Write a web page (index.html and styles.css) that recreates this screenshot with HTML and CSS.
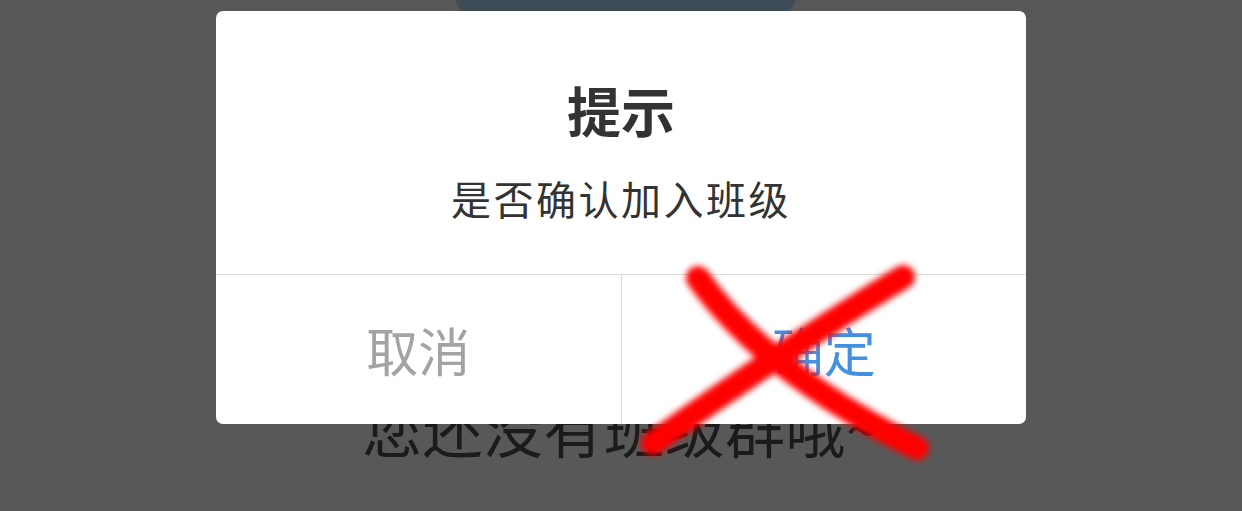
FILE: index.html
```html
<!DOCTYPE html>
<html lang="zh-CN">
<head>
<meta charset="utf-8">
<title>提示</title>
<link rel="stylesheet" href="styles.css">
</head>
<body>
<div class="page">
  <div class="banner"></div>
  <p class="empty">您还没有班级群哦~</p>
</div>

<div class="overlay">
  <div class="dialog">
    <div class="dialog-body">
      <h2 class="dialog-title">提示</h2>
      <p class="dialog-msg">是否确认加入班级</p>
    </div>
    <div class="dialog-footer">
      <div class="btn btn-cancel">取消</div>
      <div class="btn btn-ok">确定</div>
    </div>
  </div>
</div>

<svg class="mark" width="1242" height="511" viewBox="0 0 1242 511" xmlns="http://www.w3.org/2000/svg">
  <defs>
    <filter id="soft" x="-20%" y="-20%" width="140%" height="140%">
      <feGaussianBlur stdDeviation="3"/>
    </filter>
  </defs>
  <g filter="url(#soft)" fill="none" stroke="#ff0000" stroke-width="24" stroke-linecap="round">
    <path d="M698 278 Q765 372 917 448"/>
    <path d="M903 277 Q780 352 653 443"/>
  </g>
</svg>
</body>
</html>
```

FILE: styles.css
```css
html, body {
  margin: 0;
  padding: 0;
}

body {
  width: 1242px;
  height: 511px;
  overflow: hidden;
  background: #585858;
  font-family: "Noto Sans CJK SC", "Noto Sans", sans-serif;
  position: relative;
}

.page {
  display: flex;
  flex-direction: column;
}

.banner {
  width: 341px;
  height: 11px;
  margin-left: 455px;
  background: #3e4c57;
  clip-path: polygon(0 0, 100% 0, 98.3% 100%, 1.5% 100%);
}

.empty {
  margin: 386px 0 0;
  font-size: 60px;
  line-height: 60px;
  letter-spacing: 0.5px;
  color: #1b1b1b;
  text-align: center;
}

.overlay {
  position: absolute;
  inset: 0;
  display: flex;
  justify-content: center;
  align-items: flex-start;
  padding-top: 11px;
}

.dialog {
  width: 810px;
  height: 413px;
  background: #ffffff;
  border-radius: 7px;
  display: flex;
  flex-direction: column;
  overflow: hidden;
}

.dialog-body {
  height: 263px;
  box-sizing: border-box;
  padding-top: 72px;
  display: flex;
  flex-direction: column;
  align-items: center;
}

.dialog-title {
  margin: 0;
  font-size: 54px;
  line-height: 54px;
  font-weight: 700;
  color: #333333;
}

.dialog-msg {
  margin: 41px 0 0;
  font-size: 40px;
  line-height: 40px;
  letter-spacing: 2.5px;
  color: #333333;
}

.dialog-footer {
  flex: 1;
  display: flex;
  border-top: 1px solid #dddddd;
}

.btn {
  flex: 1;
  display: flex;
  align-items: center;
  justify-content: center;
  font-size: 52px;
}

.btn-cancel {
  color: #a3a3a3;
}

.btn-ok {
  color: #4390e3;
  border-left: 1px solid #dddddd;
}

.mark {
  position: absolute;
  left: 0;
  top: 0;
  pointer-events: none;
}
```
